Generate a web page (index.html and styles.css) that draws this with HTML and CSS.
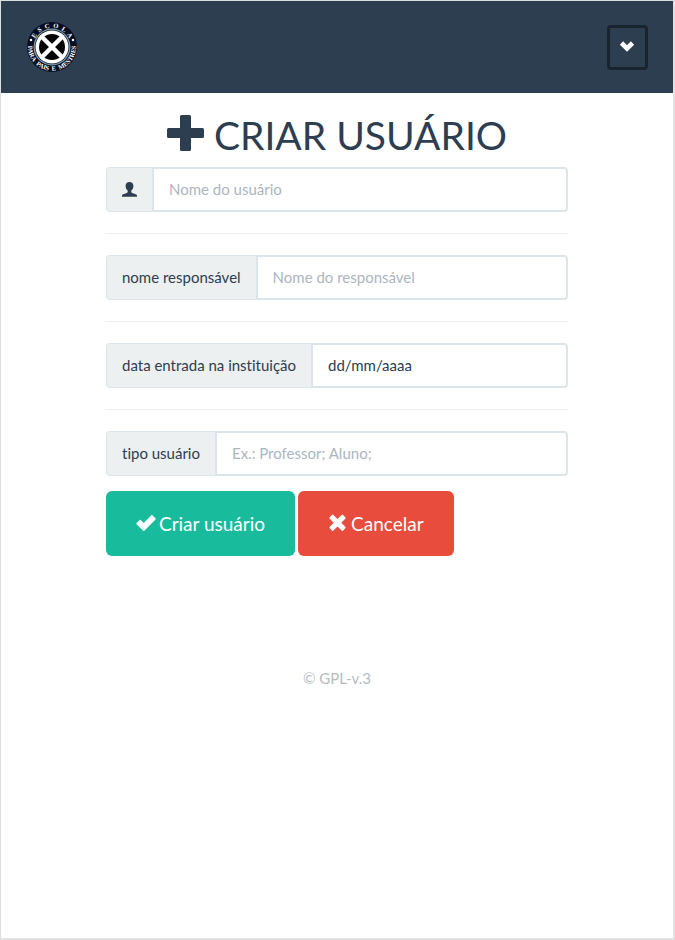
FILE: index.html
```html
<!DOCTYPE html>
<html lang="pt-BR">
<head>
<meta charset="utf-8">
<meta name="viewport" content="width=device-width, initial-scale=1">
<title>Criar usuário</title>
<link rel="stylesheet" href="styles.css">
</head>
<body>
<div class="page">
  <header class="navbar">
    <a class="brand" href="#" aria-label="Escola para Pais e Mestres">
      <svg class="logo" viewBox="0 0 100 100">
        <defs>
          <path id="arc-top" d="M11.500 50a38.500 38.500 0 0 1 77 0"/>
          <path id="arc-bottom" d="M7 28a48 48 0 1 0 86 0"/>
        </defs>
        <circle cx="50" cy="50" r="50" fill="#080d22"/>
        <circle cx="50" cy="50" r="37" fill="#7f9fae"/>
        <circle cx="50" cy="50" r="34.5" fill="#101a2c"/>
        <circle cx="50" cy="50" r="33" fill="#fff"/>
        <circle cx="50" cy="50" r="26" fill="#050505"/>
        <path d="M30 30l40 40M70 30L30 70" stroke="#fff" stroke-width="9"/>
        <circle cx="8" cy="36" r="2.5" fill="#fff"/>
        <circle cx="92" cy="36" r="2.5" fill="#fff"/>
        <text class="logo-text"><textPath href="#arc-top" startOffset="50%" text-anchor="middle">E&#160; S&#160; C&#160; O&#160; L&#160; A</textPath></text>
        <text class="logo-text"><textPath href="#arc-bottom" startOffset="50%" text-anchor="middle">PARA&#160; PAIS&#160; E&#160; MESTRES</textPath></text>
      </svg>
    </a>
    <button class="toggle" type="button" aria-label="Menu">
      <svg viewBox="0 0 18 16" width="18" height="16"><path d="M2.500 4L8 9.500 13.500 4" fill="none" stroke="#fff" stroke-width="4.600"/></svg>
    </button>
  </header>
  <main class="content">
    <h1 class="title">
      <svg viewBox="0 0 39 43" width="39" height="43" fill="currentColor"><path d="M14.500 1h8a1.500 1.500 0 0 1 1.500 1.500V14h11.500a1.500 1.500 0 0 1 1.500 1.500v7a1.500 1.500 0 0 1-1.500 1.500H24v11.500a1.500 1.500 0 0 1-1.500 1.500h-8a1.500 1.500 0 0 1-1.500-1.500V24H1.500A1.500 1.500 0 0 1 0 22.500v-7A1.500 1.500 0 0 1 1.500 14H13V2.500A1.500 1.500 0 0 1 14.500 1z"/></svg>
      <span>CRIAR USUÁRIO</span>
    </h1>
    <form>
      <div class="group">
        <label class="addon" for="nome" aria-label="Nome do usuário">
          <svg viewBox="0 0 15 15" width="15" height="15" fill="currentColor"><path d="M7.500 0c2.400 0 3.900 1.500 3.900 3.900 0 2-.9 3.700-2.100 4.700v1.100c0 .6.300.9.900 1.200l3.500 1.300c.8.300 1.300.8 1.300 1.500v1.100H0v-1.100c0-.7.500-1.200 1.300-1.500l3.500-1.300c.6-.3.900-.6.900-1.200V8.600C4.500 7.600 3.600 5.900 3.600 3.900 3.600 1.500 5.100 0 7.500 0z"/></svg>
        </label>
        <input class="control" id="nome" type="text" placeholder="Nome do usuário">
      </div>
      <hr>
      <div class="group">
        <label class="addon" for="responsavel">nome responsável</label>
        <input class="control" id="responsavel" type="text" placeholder="Nome do responsável">
      </div>
      <hr>
      <div class="group">
        <label class="addon" for="data">data entrada na instituição</label>
        <input class="control control-date" id="data" type="text" inputmode="numeric" placeholder="dd/mm/aaaa">
      </div>
      <hr>
      <div class="group">
        <label class="addon" for="tipo">tipo usuário</label>
        <input class="control" id="tipo" type="text" placeholder="Ex.: Professor; Aluno;">
      </div>
      <div class="actions">
        <button class="btn btn-success" type="submit">
          <svg viewBox="0 0 20 20" width="20" height="20" fill="currentColor"><path d="M15.300 1.300a.8.800 0 0 1 1.100 0l3.100 3.100a.8.800 0 0 1 0 1.100L8.300 16.700a.8.800 0 0 1-1.100 0L.6 10.200a.8.800 0 0 1 0-1.100L3.700 6a.8.800 0 0 1 1.100 0l2.900 2.900z"/></svg>Criar usuário</button>
        <button class="btn btn-danger" type="button">
          <svg viewBox="0 0 20 20" width="20" height="20" fill="currentColor"><path d="M5.200 .8L9.500 5 13.800.8a.8.800 0 0 1 1.100 0l2.600 2.600a.8.800 0 0 1 0 1.100L13.300 8.800l4.200 4.200a.8.800 0 0 1 0 1.100l-2.600 2.600a.8.800 0 0 1-1.100 0L9.500 12.500l-4.300 4.200a.8.800 0 0 1-1.100 0l-2.600-2.600a.8.800 0 0 1 0-1.100l4.200-4.200L1.500 4.500a.8.800 0 0 1 0-1.100L4.100.8a.8.800 0 0 1 1.100 0z"/></svg>Cancelar</button>
      </div>
    </form>
  </main>
  <footer class="footer">© GPL-v.3</footer>
</div>
</body>
</html>
```
FILE: styles.css
```css
* {
  box-sizing: border-box;
}

body {
  margin: 0;
  background: #fff;
  color: #2c3e50;
  font: 15px/21px Lato, "Liberation Sans", sans-serif;
  font-variant-ligatures: none;
}

svg {
  display: block;
  flex: none;
}

.page {
  min-height: 100vh;
  border: 1px solid #dcdfe0;
  border-right: 2px solid #e2e2e2;
  border-bottom: 2px solid #e2e2e2;
}

.navbar {
  display: flex;
  align-items: center;
  justify-content: space-between;
  padding: 21px 25px 21px 26px;
  background: #2c3e50;
}

.logo {
  width: 50px;
  height: 50px;
}

.logo-text {
  fill: #fff;
  font: bold 13px "Liberation Serif", serif;
}

.toggle {
  display: flex;
  align-items: center;
  justify-content: center;
  width: 41px;
  height: 45px;
  padding: 0;
  border: 3px solid #1a242f;
  border-radius: 4px;
  background: transparent;
}

.content {
  padding: 21px 105px 0;
}

.title {
  display: flex;
  align-items: center;
  justify-content: center;
  gap: 8px;
  margin: 0 0 10px;
  font-size: 39px;
  line-height: 43px;
  font-weight: 400;
}

.group {
  display: flex;
  height: 45px;
}

.addon {
  display: flex;
  align-items: center;
  flex: none;
  padding: 0 15px;
  border: 1px solid #dce4ec;
  border-right: 0;
  border-radius: 4px 0 0 4px;
  background: #ecf0f1;
}

.control {
  flex: 1;
  min-width: 0;
  padding: 0 15px;
  border: 2px solid #dce4ec;
  border-radius: 0 4px 4px 0;
  background: #fff;
  color: #2c3e50;
  font: inherit;
}

.control::placeholder {
  color: #acb6c0;
  opacity: 1;
}

.control-date::placeholder {
  color: #2c3e50;
}

hr {
  margin: 21px 0;
  border: 0;
  border-top: 1px solid #ecf0f1;
}

.actions {
  display: flex;
  gap: 3px;
  margin-top: 15px;
}

.btn {
  display: flex;
  align-items: center;
  gap: 3px;
  padding: 20px 30px;
  border: 0;
  border-radius: 6px;
  color: #fff;
  font: 19px/25px Lato, "Liberation Sans", sans-serif;
}

.btn-success {
  background: #18bc9c;
}

.btn-danger {
  background: #e74c3c;
}

.footer {
  padding: 112px 0 21px;
  color: #b4bcc2;
  text-align: center;
}
```
